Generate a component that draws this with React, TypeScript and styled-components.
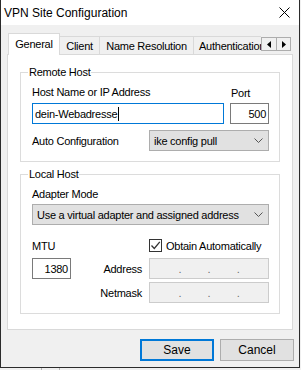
import styled, { createGlobalStyle } from 'styled-components';

const GlobalStyle = createGlobalStyle`
  html, body {
    margin: 0;
    padding: 0;
    background: #f0f0f0;
  }
  body {
    font-family: 'Liberation Sans', Arial, sans-serif;
    font-size: 11px;
    letter-spacing: -0.25px;
    color: #000;
  }
  * {
    box-sizing: border-box;
  }
`;

export default function App() {
  return (
    <>
      <GlobalStyle />
      <Window>
        <TitleBar>
          <span>VPN Site Configuration</span>
          <svg width="11" height="11" viewBox="0 0 11 11">
            <path d="M0.5 0.5 L10.5 10.5 M10.5 0.5 L0.5 10.5" stroke="#000" strokeWidth="1" fill="none" />
          </svg>
        </TitleBar>

        <Body>
          <TabRow>
            <Tab $active>General</Tab>
            <Tab $width={40}>Client</Tab>
            <Tab $width={94}>Name Resolution</Tab>
            <Tab $width={67} $clipped>Authentication</Tab>
            <TabScroller>
              <ScrollButton>
                <svg width="4" height="7" viewBox="0 0 4 7">
                  <path d="M4 0 L0 3.5 L4 7 Z" fill="#000" />
                </svg>
              </ScrollButton>
              <ScrollButton>
                <svg width="4" height="7" viewBox="0 0 4 7">
                  <path d="M0 0 L4 3.5 L0 7 Z" fill="#000" />
                </svg>
              </ScrollButton>
            </TabScroller>
          </TabRow>

          <Panel>
            <Group>
              <GroupTitle>Remote Host</GroupTitle>
              <HostGrid>
                <Label>Host Name or IP Address</Label>
                <Label>Port</Label>
                <TextBox $focused>
                  dein-Webadresse
                  <Caret />
                </TextBox>
                <TextBox $align="right">500</TextBox>
              </HostGrid>
              <ConfigRow>
                <Label>Auto Configuration</Label>
                <ComboBox $width={120}>
                  <span>ike config pull</span>
                  <Chevron />
                </ComboBox>
              </ConfigRow>
            </Group>

            <Group $gap>
              <GroupTitle>Local Host</GroupTitle>
              <Label>Adapter Mode</Label>
              <ComboBox $spaced>
                <span>Use a virtual adapter and assigned address</span>
                <Chevron />
              </ComboBox>
              <AddressGrid>
                <Label>MTU</Label>
                <span />
                <CheckRow>
                  <CheckBox>
                    <svg width="11" height="11" viewBox="0 0 11 11">
                      <path d="M1.5 5.5 L4.3 8.5 L9.8 1.8" stroke="#333" strokeWidth="1.3" fill="none" />
                    </svg>
                  </CheckBox>
                  Obtain Automatically
                </CheckRow>
                <TextBox $align="right">1380</TextBox>
                <FieldLabel>Address</FieldLabel>
                <IpBox>
                  <IpDot>.</IpDot>
                  <IpDot>.</IpDot>
                  <IpDot>.</IpDot>
                </IpBox>
                <span />
                <FieldLabel>Netmask</FieldLabel>
                <IpBox>
                  <IpDot>.</IpDot>
                  <IpDot>.</IpDot>
                  <IpDot>.</IpDot>
                </IpBox>
              </AddressGrid>
            </Group>
          </Panel>

          <ButtonRow>
            <Button $default>Save</Button>
            <Button>Cancel</Button>
          </ButtonRow>
        </Body>
      </Window>
      <Backdrop>
        <BackdropTab />
      </Backdrop>
    </>
  );
}

function Chevron() {
  return (
    <svg width="9" height="5" viewBox="0 0 9 5">
      <path d="M0.5 0.5 L4.5 4.5 L8.5 0.5" stroke="#555" strokeWidth="1" fill="none" />
    </svg>
  );
}

const Window = styled.div`
  width: 300px;
  height: 368px;
  border: 1px solid #2b2b2b;
  border-top: none;
  background: #f0f0f0;
  display: flex;
  flex-direction: column;
`;

const TitleBar = styled.div`
  height: 25px;
  flex: 0 0 auto;
  background: #ffffff;
  display: flex;
  align-items: center;
  justify-content: space-between;
  padding: 0 9px 0 3px;
  font-size: 12px;
  letter-spacing: 0;

  & > svg {
    display: block;
  }
`;

const Body = styled.div`
  display: flex;
  flex-direction: column;
  padding-top: 8px;
`;

const TabRow = styled.div`
  display: flex;
  align-items: flex-end;
  height: 22px;
  margin: 0 6px -1px;
  position: relative;
  z-index: 1;
`;

interface TabProps {
  $active?: boolean;
  $width?: number;
  $clipped?: boolean;
}

const Tab = styled.div<TabProps>`
  display: flex;
  align-items: center;
  justify-content: ${({ $clipped }) => ($clipped ? 'flex-start' : 'center')};
  white-space: nowrap;
  overflow: hidden;
  width: ${({ $active, $width }) => ($active ? 52 : $width)}px;
  height: ${({ $active }) => ($active ? 22 : 18)}px;
  margin-left: ${({ $active }) => ($active ? 1 : 0)}px;
  margin-bottom: ${({ $active }) => ($active ? 0 : 1)}px;
  padding-left: ${({ $clipped }) => ($clipped ? 5 : 0)}px;
  padding-bottom: ${({ $active }) => ($active ? 1 : 0)}px;
  background: ${({ $active }) => ($active ? '#ffffff' : '#f0f0f0')};
  border: 1px solid #d9d9d9;
  border-bottom: none;
  border-left: ${({ $active }) => ($active ? '1px solid #d9d9d9' : 'none')};
  border-right: ${({ $clipped }) => ($clipped ? 'none' : '1px solid #d9d9d9')};
`;

const TabScroller = styled.div`
  display: flex;
  align-self: flex-start;
  margin-top: 4px;
  height: 14px;
  border: 1px solid #adadad;
  background: #f0f0f0;
`;

const ScrollButton = styled.div`
  width: 14px;
  height: 12px;
  display: flex;
  align-items: center;
  justify-content: center;

  & + & {
    border-left: 1px solid #adadad;
  }
`;

const Panel = styled.div`
  height: 276px;
  margin: 0 6px;
  background: #ffffff;
  border: 1px solid #d9d9d9;
  padding: 10px 12px 0;
  display: flex;
  flex-direction: column;
`;

const Group = styled.fieldset<{ $gap?: boolean }>`
  margin: ${({ $gap }) => ($gap ? '5px' : '0')} 0 0;
  padding: 6px 10px 10px 11px;
  border: 1px solid #dcdcdc;
  min-width: 0;
  display: flex;
  flex-direction: column;
`;

const GroupTitle = styled.legend`
  padding: 0 1px;
  margin-left: -4px;
  line-height: 14px;
`;

const Label = styled.div`
  line-height: 14px;
  white-space: nowrap;
`;

const FieldLabel = styled(Label)`
  align-self: center;
  text-align: right;
  padding-right: 1px;
`;

const HostGrid = styled.div`
  display: grid;
  grid-template-columns: 192px 39px;
  column-gap: 6px;
  row-gap: 3px;

  & > ${Label}:nth-child(2) {
    padding-left: 1px;
    margin-top: 1px;
  }
`;

const ConfigRow = styled.div`
  display: flex;
  align-items: center;
  justify-content: space-between;
  margin-top: 6px;
`;

interface TextBoxProps {
  $focused?: boolean;
  $align?: 'left' | 'right';
}

const TextBox = styled.div<TextBoxProps>`
  height: 21px;
  display: flex;
  align-items: center;
  justify-content: ${({ $align }) => ($align === 'right' ? 'flex-end' : 'flex-start')};
  padding: 0 2px;
  background: #ffffff;
  border: 1px solid ${({ $focused }) => ($focused ? '#0078d7' : '#7a7a7a')};
  white-space: nowrap;
`;

const Caret = styled.span`
  display: inline-block;
  width: 1px;
  height: 14px;
  margin-left: 1px;
  background: #000;
`;

interface ComboProps {
  $width?: number;
  $spaced?: boolean;
}

const ComboBox = styled.div<ComboProps>`
  width: ${({ $width }) => ($width ? `${$width}px` : 'auto')};
  height: 21px;
  margin-top: ${({ $spaced }) => ($spaced ? 3 : 0)}px;
  display: flex;
  align-items: center;
  justify-content: space-between;
  padding: 0 5px 0 4px;
  background: #e1e1e1;
  border: 1px solid #adadad;
  white-space: nowrap;

  & > svg {
    flex: 0 0 auto;
  }
`;

const AddressGrid = styled.div`
  display: grid;
  grid-template-columns: 39px 1fr 120px;
  grid-template-rows: 16px 21px 21px;
  column-gap: 6px;
  row-gap: 3px;
  margin-top: 14px;
`;

const CheckRow = styled.div`
  display: flex;
  align-items: flex-start;
  gap: 4px;
  line-height: 14px;
  white-space: nowrap;
`;

const CheckBox = styled.div`
  width: 13px;
  height: 13px;
  border: 1px solid #333333;
  background: #ffffff;
  display: flex;
  align-items: center;
  justify-content: center;
`;

const IpBox = styled.div`
  display: flex;
  justify-content: space-evenly;
  align-items: center;
  height: 21px;
  background: #f0f0f0;
  border: 1px solid #cccccc;
  padding: 0 2px;
`;

const IpDot = styled.span`
  color: #6d6d6d;
  line-height: 14px;
`;

const ButtonRow = styled.div`
  display: flex;
  justify-content: flex-end;
  gap: 6px;
  margin-top: 9px;
  padding-right: 5px;
`;

const Button = styled.div<{ $default?: boolean }>`
  width: 74px;
  height: 22px;
  display: flex;
  align-items: center;
  justify-content: center;
  background: #e1e1e1;
  border: ${({ $default }) => ($default ? '2px solid #0078d7' : '1px solid #adadad')};
  font-size: 12px;
  letter-spacing: 0;
`;

const Backdrop = styled.div`
  height: 2px;
  display: flex;
  padding-left: 41px;
`;

const BackdropTab = styled.div`
  width: 19px;
  border-left: 1px solid #b4b4b4;
  border-right: 1px solid #b4b4b4;
`;
